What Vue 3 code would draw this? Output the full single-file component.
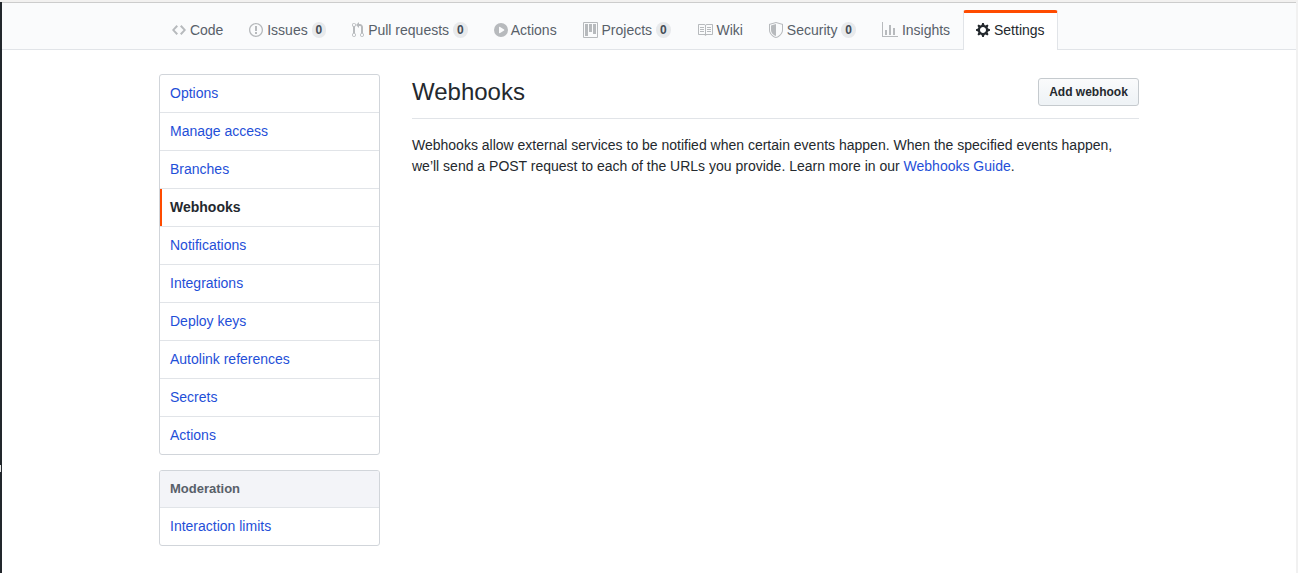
<script setup>
const tabs = [
  { label: 'Code', w: 14, d: 'M9.5 3L8 4.5 11.5 8 8 11.5 9.5 13 14 8 9.5 3zm-5 0L0 8l4.5 5L6 11.5 2.5 8 6 4.5 4.5 3z' },
  { label: 'Issues', w: 14, count: 0, d: 'M7 2.3c3.14 0 5.7 2.56 5.7 5.7s-2.56 5.7-5.7 5.7A5.71 5.71 0 011.3 8c0-3.14 2.56-5.7 5.7-5.7zM7 1C3.14 1 0 4.14 0 8s3.14 7 7 7 7-3.14 7-7-3.14-7-7-7zm1 3H6v5h2V4zm0 6H6v2h2v-2z' },
  { label: 'Pull requests', w: 12, count: 0, d: 'M11 11.28V5c-.03-.78-.34-1.47-.94-2.06C9.46 2.35 8.78 2.03 8 2H7V0L4 3l3 3V4h1c.27.02.48.11.69.31.21.2.3.42.31.69v6.28A1.993 1.993 0 0010 15a1.993 1.993 0 001-3.72zm-1 2.92c-.66 0-1.2-.55-1.2-1.2 0-.65.55-1.2 1.2-1.2.65 0 1.2.55 1.2 1.2 0 .65-.55 1.2-1.2 1.2zM4 3c0-1.11-.89-2-2-2a1.993 1.993 0 00-1 3.72v6.56A1.993 1.993 0 002 15a1.993 1.993 0 001-3.72V4.72c.59-.34 1-.98 1-1.72zm-.8 10c0 .66-.55 1.2-1.2 1.2-.65 0-1.2-.55-1.2-1.2 0-.65.55-1.2 1.2-1.2.65 0 1.2.55 1.2 1.2zM2 4.2C1.34 4.2.8 3.65.8 3c0-.65.55-1.2 1.2-1.2.65 0 1.2.55 1.2 1.2 0 .65-.55 1.2-1.2 1.2z' },
  { label: 'Actions', w: 14, kern: true, d: 'M14 8A7 7 0 110 8a7 7 0 0114 0zM5 5.2v5.6c0 .4.4.6.7.4l4.4-2.8c.3-.2.3-.6 0-.8L5.7 4.8C5.4 4.6 5 4.8 5 5.2z' },
  { label: 'Projects', w: 15, count: 0, d: 'M10 12h3V2h-3v10zm-4-2h3V2H6v8zm-4 4h3V2H2v12zm-1 1h13V1H1v14zM14 0H1a1 1 0 00-1 1v14a1 1 0 001 1h13a1 1 0 001-1V1a1 1 0 00-1-1z' },
  { label: 'Wiki', w: 16, d: 'M3 5h4v1H3V5zm0 3h4V7H3v1zm0 2h4V9H3v1zm11-5h-4v1h4V5zm0 2h-4v1h4V7zm0 2h-4v1h4V9zm2-6v9c0 .55-.45 1-1 1H9.5l-1 1-1-1H2c-.55 0-1-.45-1-1V3c0-.55.45-1 1-1h5.5l1 1 1-1H15c.55 0 1 .45 1 1zm-8 .5L7.5 3H2v9h6V3.5zm7-.5H9.5l-.5.5V12h6V3z' },
  { label: 'Security', w: 14, count: 0, d: 'M0 2l7-2 7 2v6.02C14 12.69 8.69 16 7 16c-1.69 0-7-3.31-7-7.98V2zm1 .75L7 1l6 1.75v5.268C13 12.104 8.449 15 7 15c-1.449 0-6-2.896-6-6.982V2.75zm1 .75L7 2v12c-1.207 0-5-2.482-5-5.985V3.5z' },
  { label: 'Insights', w: 16, d: 'M16 14v1H0V0h1v14h15zM5 13H3V8h2v5zm4 0H7V3h2v10zm4 0h-2V6h2v7z' },
  { label: 'Settings', w: 14, selected: true, d: 'M14 8.77v-1.6l-1.94-.64-.45-1.09.88-1.84-1.13-1.13-1.81.91-1.09-.45-.69-1.92h-1.6l-.63 1.94-1.11.45-1.84-.88-1.13 1.13.91 1.81-.45 1.09L0 7.23v1.59l1.94.64.45 1.09-.88 1.84 1.13 1.13 1.81-.91 1.09.45.69 1.92h1.59l.63-1.94 1.11-.45 1.84.88 1.13-1.13-.92-1.81.47-1.09L14 8.75v.02zM7 11c-1.66 0-3-1.34-3-3s1.34-3 3-3 3 1.34 3 3-1.34 3-3 3z' },
]
const menu = ['Options', 'Manage access', 'Branches', 'Webhooks', 'Notifications', 'Integrations', 'Deploy keys', 'Autolink references', 'Secrets', 'Actions']
</script>

<template>
  <div class="window">
    <header class="repo-head">
      <nav class="tabs container">
        <a v-for="t in tabs" :key="t.label" class="tab" :class="{ selected: t.selected }">
          <svg class="icon" :width="t.w" height="16" :viewBox="`0 0 ${t.w} 16`"><path fill-rule="evenodd" :d="t.d" /></svg>
          <span :class="{ kern: t.kern }">{{ t.label }}</span>
          <span v-if="t.count !== undefined" class="counter">{{ t.count }}</span>
        </a>
      </nav>
    </header>
    <div class="body container">
      <aside class="side">
        <nav class="menu">
          <a v-for="m in menu" :key="m" class="item" :class="{ current: m === 'Webhooks' }">{{ m }}</a>
        </nav>
        <nav class="menu">
          <div class="menu-heading">Moderation</div>
          <a class="item">Interaction limits</a>
        </nav>
      </aside>
      <main class="content">
        <div class="subhead">
          <h2>Webhooks</h2>
          <button class="btn">Add webhook</button>
        </div>
        <p>Webhooks allow external services to be notified when certain events happen. When the specified events happen, we’ll send a POST request to each of the URLs you provide. Learn more in our <a>Webhooks Guide</a>.</p>
      </main>
    </div>
  </div>
</template>

<style>
body {
  margin: 0;
  overflow: hidden;
}
</style>

<style scoped>
* { box-sizing: border-box; }
.window {
  height: 573px;
  padding-left: 2px;
  border-top: 2px solid #f2f1f0;
  border-right: 2px solid #f1f1f1;
  background:
    linear-gradient(#e4e4e4, #e4e4e4) 0 463px / 1px 7px no-repeat,
    linear-gradient(#22272c, #22272c) 0 0 / 2px 100% no-repeat,
    #fff;
  color: #24292e;
  font: 14px/21px "Liberation Sans", Arial, sans-serif;
  overflow: hidden;
}
.container {
  width: 980px;
  margin: 0 auto;
}
.repo-head {
  height: 48px;
  padding-top: 7px;
  border-top: 1px solid #ccc;
  border-bottom: 1px solid #e1e4e8;
  background: #fafbfc;
}
.tabs {
  display: flex;
  height: 40px;
}
.tab {
  display: flex;
  align-items: center;
  gap: 3.89px;
  flex: none;
  height: 40px;
  padding: 0 12px 2px;
  border: 1px solid transparent;
  border-top-width: 3px;
  border-bottom: 0;
  border-radius: 3px 3px 0 0;
  color: #586069;
  white-space: nowrap;
}
.tab.selected {
  border-color: #ff4b00 #e1e4e8 transparent;
  background: #fff;
  color: #24292e;
}
.icon {
  flex: none;
  margin-bottom: 1px;
  fill: #b7babd;
}
.selected .icon { fill: #24292e; }
/* Tightens the space before a leading capital A */
.kern { margin-left: -0.77px; }
.counter {
  height: 16px;
  margin-bottom: 1px;
  padding: 0 4px;
  border-radius: 8px;
  background: #e8eaec;
  color: #444d56;
  font-size: 12px;
  font-weight: 700;
  line-height: 16px;
}
.body {
  display: flex;
  gap: 32px;
  padding-top: 24px;
}
.side {
  flex: none;
  width: 221px;
}
.menu {
  margin-bottom: 15px;
  border: 1px solid #d1d5da;
  border-radius: 3px;
  overflow: hidden;
}
.item {
  display: block;
  height: 38px;
  padding: 8px 10px;
  border-bottom: 1px solid #e1e4e8;
  color: #1f4fd8;
}
.item:last-child {
  height: 37px;
  border-bottom: 0;
}
.item.current {
  box-shadow: inset 2px 0 #ff4b00;
  color: #24292e;
  font-weight: 700;
}
.menu-heading {
  height: 37px;
  padding: 8px 10px;
  border-bottom: 1px solid #e1e4e8;
  background: #f3f4f8;
  color: #586069;
  font-size: 13px;
  font-weight: 700;
  line-height: 20px;
}
.content { flex: 1; }
.subhead {
  display: flex;
  justify-content: space-between;
  height: 45px;
  border-bottom: 1px solid #e1e4e8;
}
h2 {
  margin: 0;
  font-size: 24px;
  font-weight: 400;
  line-height: 36px;
}
.btn {
  width: 101px;
  height: 28px;
  margin-top: 4px;
  padding: 0;
  border: 1px solid #c5cace;
  border-radius: 3px;
  background: linear-gradient(#fafbfc, #eff3f6 90%);
  color: #24292e;
  font: 700 12px/20px "Liberation Sans", Arial, sans-serif;
}
p {
  margin: 16px 0 0;
}
p a { color: #1f4fd8; }
</style>
